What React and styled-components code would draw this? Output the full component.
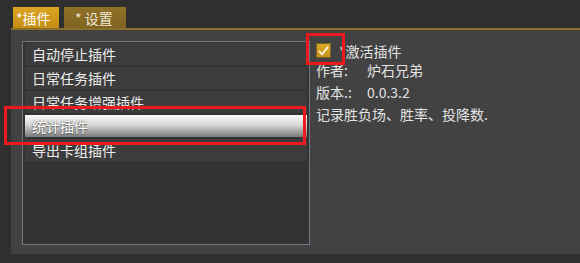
import React from 'react';
import styled, { createGlobalStyle } from 'styled-components';

const GlobalStyle = createGlobalStyle`
  html, body {
    margin: 0;
    padding: 0;
    background: #2f2f2f;
  }
  body {
    font-family: "Noto Sans CJK SC", "Noto Sans", sans-serif;
    color: #e6e6e6;
  }
`;

const Page = styled.div`
  position: relative;
  width: 580px;
  height: 263px;
  padding-top: 7px;
  box-sizing: border-box;
  overflow: hidden;
`;

const TabBar = styled.div`
  display: flex;
  gap: 5px;
  padding-left: 13px;
  height: 21px;
`;

const Tab = styled.div`
  height: 21px;
  width: ${props => props.width}px;
  box-sizing: border-box;
  padding-left: ${props => (props.active ? 3 : 11)}px;
  display: flex;
  align-items: center;
  font-size: 14px;
  color: ${props => (props.active ? '#ffffff' : '#f0ead8')};
  background: ${props =>
    props.active
      ? 'linear-gradient(#dba421, #c68f15)'
      : 'linear-gradient(#8f7126, #7f6320)'};
`;

const Panel = styled.div`
  margin-left: 11px;
  border-top: 2px solid #8a7028;
  background: #424242;
  height: 226px;
  box-sizing: border-box;
  padding: 11px 0 0 11px;
  display: flex;
  gap: 6px;
`;

const List = styled.div`
  width: 288px;
  height: 204px;
  box-sizing: border-box;
  border: 1px solid #6b7986;
  background: #333333;
  padding: 1px 2px 0 2px;
  display: flex;
  flex-direction: column;
  gap: 2px;
`;

const Item = styled.div`
  height: 22px;
  flex-shrink: 0;
  display: flex;
  align-items: center;
  padding-left: 7px;
  font-size: 14px;
  color: ${props => (props.selected ? '#ffffff' : '#ececec')};
  background: ${props =>
    props.selected
      ? 'linear-gradient(#fbfbfb 0%, #d6d6d6 45%, #a4a4a4 75%, #7c7c7c 100%)'
      : '#3c3c3c'};
  text-shadow: ${props => (props.selected ? '0 0 2px #666, 0 1px 1px #555' : 'none')};
`;

const Details = styled.div`
  display: flex;
  flex-direction: column;
  padding-top: 1px;
  font-size: 14px;
  color: #e2e2e2;
`;

const CheckRow = styled.div`
  display: flex;
  align-items: center;
  gap: 8px;
  height: 17px;
`;

const CheckBox = styled.div`
  width: 15px;
  height: 15px;
  box-sizing: border-box;
  border: 1px solid #7a6420;
  background: linear-gradient(#dcaa2a, #c8921a);
  display: flex;
  align-items: center;
  justify-content: center;
`;

const InfoRow = styled.div`
  display: flex;
  height: 22px;
  align-items: center;
`;

const Label = styled.span`
  width: 51px;
  flex-shrink: 0;
`;

const Marker = styled.div`
  position: absolute;
  left: ${props => props.x}px;
  top: ${props => props.y}px;
  width: ${props => props.w}px;
  height: ${props => props.h}px;
  box-sizing: border-box;
  border: 3px solid #ec1a1f;
  pointer-events: none;
`;

const plugins = ['自动停止插件', '日常任务插件', '日常任务增强插件', '统计插件', '导出卡组插件'];

export default function App() {
  return (
    <Page>
      <GlobalStyle />
      <TabBar>
        <Tab active width={46}>*插件</Tab>
        <Tab width={62}>* 设置</Tab>
      </TabBar>
      <Panel>
        <List>
          {plugins.map(name => (
            <Item key={name} selected={name === '统计插件'}>{name}</Item>
          ))}
        </List>
        <Details>
          <CheckRow>
            <CheckBox>
              <svg width="11" height="10" viewBox="0 0 11 10">
                <path d="M1.5 5.5 L4.2 8.3 L9.6 1.4" fill="none" stroke="#fff6dc" strokeWidth="1.8" strokeLinecap="round" strokeLinejoin="round" />
              </svg>
            </CheckBox>
            <span>*激活插件</span>
          </CheckRow>
          <InfoRow>
            <Label>作者:</Label>
            <span>炉石兄弟</span>
          </InfoRow>
          <InfoRow>
            <Label>版本.:</Label>
            <span>0.0.3.2</span>
          </InfoRow>
          <InfoRow>记录胜负场、胜率、投降数.</InfoRow>
        </Details>
      </Panel>
      <Marker x={4} y={106} w={302} h={39} />
      <Marker x={306} y={33} w={39} h={32} />
    </Page>
  );
}
